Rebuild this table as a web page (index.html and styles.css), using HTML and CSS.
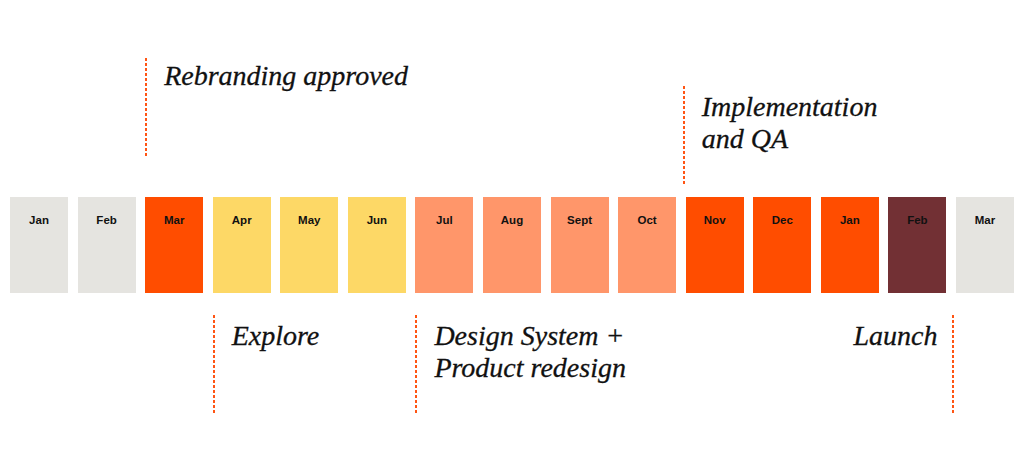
FILE: index.html
```html
<!DOCTYPE html>
<html lang="en">
<head>
<meta charset="utf-8">
<title>Timeline</title>
<link rel="stylesheet" href="styles.css">
</head>
<body>
<main class="timeline">
  <div class="lane lane-top">
    <div class="note note-rebrand"><p class="note-text">Rebranding approved</p></div>
    <div class="note note-impl"><p class="note-text">Implementation<br>and QA</p></div>
  </div>

  <div class="months">
    <div class="month m-gray">Jan</div>
    <div class="month m-gray">Feb</div>
    <div class="month m-orange">Mar</div>
    <div class="month m-yellow">Apr</div>
    <div class="month m-yellow">May</div>
    <div class="month m-yellow">Jun</div>
    <div class="month m-salmon">Jul</div>
    <div class="month m-salmon">Aug</div>
    <div class="month m-salmon">Sept</div>
    <div class="month m-salmon">Oct</div>
    <div class="month m-orange">Nov</div>
    <div class="month m-orange">Dec</div>
    <div class="month m-orange">Jan</div>
    <div class="month m-maroon">Feb</div>
    <div class="month m-gray">Mar</div>
  </div>

  <div class="lane lane-bottom">
    <div class="note note-explore"><p class="note-text">Explore</p></div>
    <div class="note note-design"><p class="note-text">Design System +<br>Product redesign</p></div>
    <div class="note note-launch"><p class="note-text">Launch</p></div>
  </div>
</main>
</body>
</html>
```

FILE: styles.css
```css
* { box-sizing: border-box; }

html, body {
  margin: 0;
  padding: 0;
  background: #ffffff;
}

body {
  width: 1024px;
  height: 472px;
  overflow: hidden;
}

.timeline {
  padding: 58px 10px 0;
  display: flex;
  flex-direction: column;
}

.lane,
.months {
  display: grid;
  grid-template-columns: repeat(15, 1fr);
  column-gap: 9.5px;
}

.lane-top {
  height: 139px;
  align-items: start;
}

.lane-bottom {
  margin-top: 22px;
  align-items: start;
}

.note {
  height: 99px;
  padding-left: 19px;
  background-image: linear-gradient(to bottom, #ff5514 60%, rgba(255, 255, 255, 0) 60%);
  background-size: 2px 5px;
  background-repeat: repeat-y;
  background-position: left top;
}

.note-text {
  margin: 0;
  font-family: "Liberation Serif", "DejaVu Serif", serif;
  font-style: italic;
  font-size: 28px;
  line-height: 32px;
  color: #111111;
  white-space: nowrap;
  -webkit-text-stroke: 0.3px #111111;
}

.note-rebrand {
  grid-column: 3 / 9;
  padding-top: 2px;
}

.note-impl {
  grid-column: 11 / 16;
  margin-top: 28px;
  margin-left: -3px;
  padding-top: 5px;
}

.note-explore {
  grid-column: 4 / 7;
  padding-top: 5px;
}

.note-design {
  grid-column: 7 / 12;
  padding-top: 5px;
}

.note-launch {
  grid-column: 12 / 15;
  padding-left: 0;
  padding-right: 17px;
  padding-top: 5px;
  margin-right: -8px;
  text-align: right;
  background-position: right top;
}

.months {
  height: 96px;
}

.month {
  font-family: "Liberation Sans", Arial, sans-serif;
  font-weight: 700;
  font-size: 11.5px;
  line-height: 13px;
  color: #111111;
  text-align: center;
  padding-top: 17px;
}

.m-gray   { background: #e5e4e0; }
.m-orange { background: #ff4d00; }
.m-yellow { background: #fdd866; }
.m-salmon { background: #ff966a; }
.m-maroon { background: #723034; }
```
